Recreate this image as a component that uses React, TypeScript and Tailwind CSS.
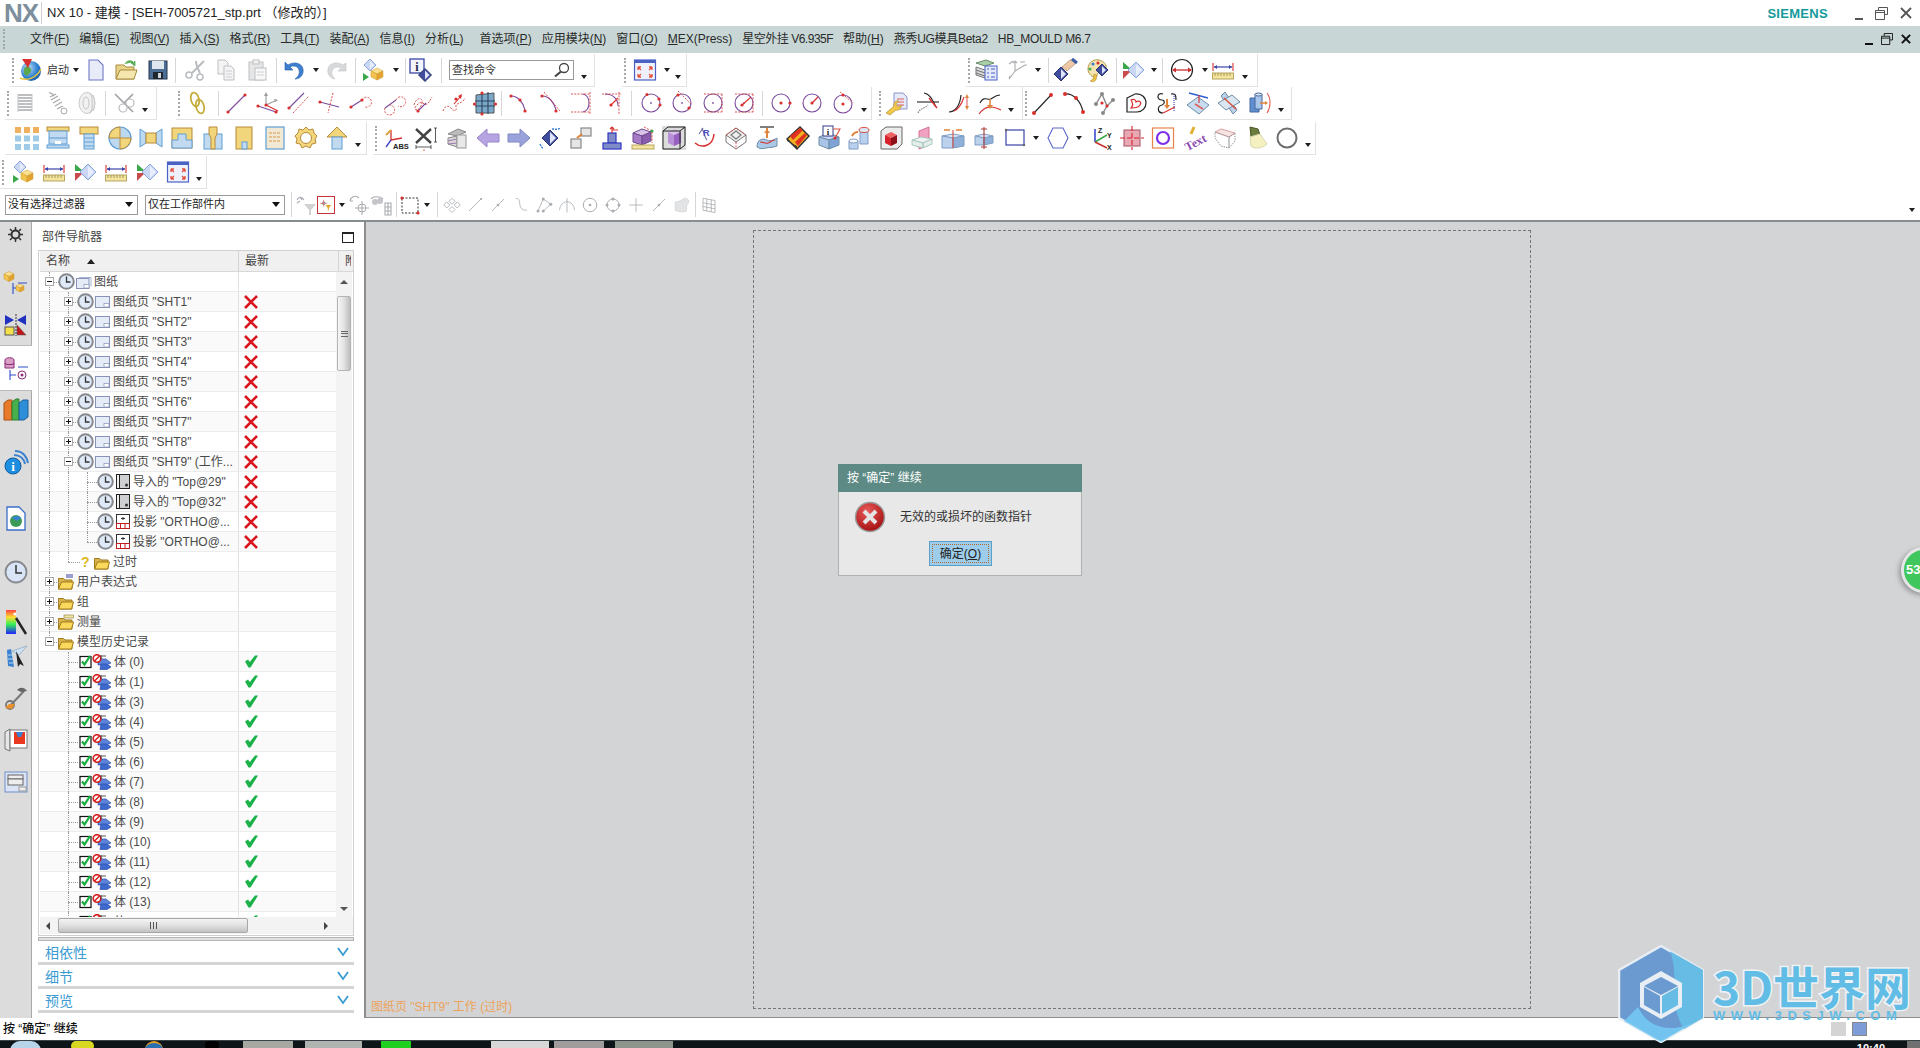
import React from "react";

// small drawing helpers for the toolbar pictures
const Dot = ({ x, y, c = "#d8302f", r = 1.6 }: { x: number; y: number; c?: string; r?: number }) => <circle cx={x} cy={y} r={r} fill={c} />;
const Ln = ({ d, c = "#7b4a9e", w = 1.1, dash }: { d: string; c?: string; w?: number; dash?: string }) => (
  <path d={d} fill="none" stroke={c} strokeWidth={w} strokeDasharray={dash} />
);
const Red = ({ d }: { d: string }) => <Ln d={d} c="#d8403f" w={0.9} dash="2 1.3" />;
const Dia = ({ x, y, s = 6, dark = false }: { x: number; y: number; s?: number; dark?: boolean }) => (
  <>
    <path d={`M${x} ${y - s}L${x + s} ${y}L${x} ${y + s}L${x - s} ${y}Z`} fill={dark ? "#3f4d9c" : "#c9d6f4"} stroke={dark ? "#2c3570" : "#8ea6de"} />
    <path d={`M${x} ${y - s + 2}L${x + s - 2} ${y}L${x} ${y + s - 2}Z`} fill={dark ? "#dfe6fa" : "#e8eefb"} />
  </>
);
const Cube = ({ x, y, s = 6 }: { x: number; y: number; s?: number }) => (
  <>
    <path d={`M${x} ${y}l${s} -${s / 2}l${s} ${s / 2}l-${s} ${s / 2}Z`} fill="#fbe08f" stroke="#c99a2c" strokeWidth=".5" />
    <path d={`M${x} ${y}l${s} ${s / 2}v${s}l-${s} -${s / 2}Z`} fill="#f5c34f" stroke="#c99a2c" strokeWidth=".5" />
    <path d={`M${x + 2 * s} ${y}l-${s} ${s / 2}v${s}l${s} -${s / 2}Z`} fill="#e3a333" stroke="#c99a2c" strokeWidth=".5" />
  </>
);
const BlueBox = ({ x, y, w, h, f = "#c2daf0" }: { x: number; y: number; w: number; h: number; f?: string }) => (
  <rect x={x} y={y} width={w} height={h} fill={f} stroke="#5f9fd6" />
);
const YelBox = ({ x, y, w, h }: { x: number; y: number; w: number; h: number }) => <rect x={x} y={y} width={w} height={h} fill="#f2d67c" stroke="#b98a3a" />;
const Ruler = () => (
  <>
    <Ln d="M2 5V13M22 5V13" c="#d8302f" />
    <Ln d="M3 9H21" c="#3a43a8" w={1.2} />
    <path d="M3 9l3-2v4ZM21 9l-3-2v4Z" fill="#3a43a8" />
    <rect x="1.500" y="15" width="21" height="6" fill="#f3e4a0" stroke="#b7a55e" />
    <Ln d="M4 15v3M7 15v3M10 15v3M13 15v3M16 15v3M19 15v3" c="#8b7d3c" w={0.7} />
  </>
);
const TinyCircle = ({ a = false, b = false, tan = false }: { a?: boolean; b?: boolean; tan?: boolean }) => (
  <>
    <circle cx="12" cy="12" r="9" fill="none" stroke="#7b4a9e" strokeWidth="1.100" />
    {tan && <Red d="M8 0L22 14" />}
    {a && <Red d="M3 3H21M3 21H21M21 3V21" />}
    {b ? <><Dot x={12} y={12} /><Dot x={21} y={12} /></> : <Ln d="M11 12h2M12 11v2" w={0.8} />}
  </>
);
const GrayNode = ({ d }: { d: string }) => <Ln d={d} c="#a9acb0" w={1.1} />;

const icons: Record<string, React.ReactNode> = {
  ball: (
    <>
      <defs>
        <radialGradient id="gb" cx=".35" cy=".35" r=".8"><stop offset="0" stopColor="#bfe3fb" /><stop offset=".6" stopColor="#2f7fd0" /><stop offset="1" stopColor="#164e9a" /></radialGradient>
      </defs>
      <circle cx="12" cy="13" r="10" fill="url(#gb)" />
      <path d="M6 9c3-2 5 0 6 2s-1 4-3 6-4-1-4-3 0-4 1-5Z" fill="#5da84a" />
      <path d="M1 20c6 3 16 1 21-9" fill="none" stroke="#e7c43d" strokeWidth="1.500" />
      <path d="M3 1h10l-4 9Z" fill="#d8302f" />
    </>
  ),
  new: <path d="M5 2h9l5 5v15H5Z" fill="#e8ebf8" stroke="#6f77c8" strokeWidth="1.100" />,
  open: (
    <>
      <path d="M2 7h8l2 2h8v12H2Z" fill="#e9d28a" stroke="#a68a3c" />
      <path d="M2 21l4-9h17l-3 9Z" fill="#f5e6ae" stroke="#a68a3c" />
      <path d="M11 6c2-4 6-4 8-2l-2 1 4 3 0-5-1 1" fill="#5cb85c" stroke="#3b8d3b" strokeWidth=".6" />
    </>
  ),
  save: (
    <>
      <rect x="3" y="3" width="18" height="18" fill="#4c6e95" stroke="#24364e" />
      <rect x="6" y="3" width="12" height="8" fill="#dfe6ee" />
      <rect x="7" y="14" width="10" height="7" fill="#20262e" />
      <rect x="12" y="15" width="3" height="5" fill="#cfd6de" />
    </>
  ),
  cut: (
    <>
      <Ln d="M21 3L9 15M13 3c0 5 2 8 4 12M3 21" c="#b9bcc0" w={2} />
      <circle cx="6" cy="17" r="3" fill="none" stroke="#b9bcc0" strokeWidth="1.500" />
      <circle cx="17" cy="19" r="3" fill="none" stroke="#b9bcc0" strokeWidth="1.500" />
    </>
  ),
  copy: (
    <>
      <path d="M4 2h7l3 3v11H4Z" fill="#f4f4f4" stroke="#bcbfc2" />
      <path d="M10 8h7l3 3v11H10Z" fill="#f4f4f4" stroke="#bcbfc2" />
      <Ln d="M12 13h6M12 16h6M12 19h6" c="#c9cbce" w={0.9} />
    </>
  ),
  paste: (
    <>
      <rect x="4" y="4" width="14" height="18" fill="#e6e6e6" stroke="#bcbfc2" />
      <rect x="8" y="2" width="6" height="4" fill="#f3f3f3" stroke="#bcbfc2" />
      <rect x="10" y="10" width="11" height="12" fill="#f8f8f8" stroke="#bcbfc2" />
      <Ln d="M12 14h7M12 17h7" c="#c9cbce" w={0.9} />
    </>
  ),
  undo: <path d="M3 4v8h8L8 9c3-2 8-1 9 3 1 4-1 7-4 9 5 0 9-4 8-10-1-6-9-8-15-4Z" fill="#3f7fd0" stroke="#245ca6" strokeWidth=".6" />,
  redo: <path d="M21 5v8h-8l3-3c-3-2-8-1-9 3-1 3 1 6 3 8-5-1-8-5-7-10 1-6 9-8 15-4Z" fill="#d7d9db" stroke="#bfc1c3" strokeWidth=".6" />,
  diaCube: (
    <>
      <Dia x={9} y={7} s={6} />
      <path d="M2 15l6 4-6 4Z" fill="#3aa84a" />
      <Cube x={10} y={13} s={6} />
    </>
  ),
  info: (
    <>
      <rect x="1" y="1" width="14" height="14" fill="#f3f5ff" stroke="#3b45a5" strokeWidth="1.300" />
      <text x="8" y="12.500" textAnchor="middle" fontSize="12" fontWeight="700" fontFamily="Liberation Serif" fill="#20264f">i</text>
      <Dia x={16} y={17} s={6.500} dark />
    </>
  ),
  fit: (
    <>
      <rect x="1.500" y="2" width="21" height="20" fill="#eef1fb" stroke="#4a62c4" strokeWidth="1.200" />
      <rect x="1.500" y="2" width="21" height="3" fill="#4a62c4" />
      <Ln d="M5 9l3 3M19 9l-3 3M5 19l3-3M19 19l-3-3M5 9h3M5 9v3M19 9h-3M19 9v3M5 19h3M5 19v-3M19 19h-3M19 19v-3" c="#e2503c" w={1.300} />
    </>
  ),
  layers: (
    <>
      <path d="M2 5l10-3 8 3-9 3Z" fill="#a9cfa8" stroke="#6b8b6a" />
      <path d="M2 9l9 3 4-1v8l-4 1-9-3Z" fill="#dcdcdc" stroke="#777" />
      <Ln d="M2 12l9 3M2 15l9 3" c="#777" />
      <rect x="11" y="8" width="12" height="14" fill="#e4e8fb" stroke="#4a62c4" />
      <Ln d="M13 11h2M17 11h4M13 15h2M17 15h4M13 19h2M17 19h4" c="#4a62c4" />
    </>
  ),
  csysGray: <GrayNode d="M10 13V3M10 13l10-6M10 13l-6 8M10 3l-2 2M10 3l2 2M20 7h2M4 21l1-3M4 6l4-3M15 4l5 0" />,
  handDia: (
    <>
      <Dia x={7} y={16} s={7} dark />
      <path d="M8 9l8-7c3-1 6 1 5 4l-8 7-5-4Z" fill="#efc9a5" stroke="#9b7a5a" strokeWidth=".6" />
      <path d="M18 1l5 4" stroke="#3a5fa8" strokeWidth="3" />
    </>
  ),
  palette: (
    <>
      <path d="M3 11C3 4 9 1 14 2c5 1 8 5 7 9-1 3-6 2-8 4-2 2 0 4-3 4-4 0-7-4-7-8Z" fill="#f4e4b0" stroke="#b49a50" />
      <Dot x={8} y={6} c="#3a7fd0" /><Dot x={13} y={5} c="#d8302f" /><Dot x={5} y={11} c="#4caf50" />
      <Dia x={17} y={12} s={6} dark />
      <path d="M5 23l3-2 1-5 3 1-1 5-3 2Z" fill="#f0c040" stroke="#a68a3c" strokeWidth=".5" />
    </>
  ),
  triDia: (
    <>
      <path d="M2 4l8 7H2Z" fill="#3aa84a" />
      <path d="M2 13h8l-8 8Z" fill="#c94b4b" />
      <Dia x={15} y={12} s={8} />
    </>
  ),
  circArrow: (
    <>
      <circle cx="12" cy="12" r="10.500" fill="none" stroke="#222" strokeWidth="1.200" />
      <Ln d="M3 12H21" c="#c82f2f" w={1.300} />
      <path d="M2 12l4-2.500v5ZM22 12l-4-2.500v5Z" fill="#c82f2f" />
    </>
  ),
  ruler: <Ruler />,
  spring: (
    <>
      <Ln d="M5 4h14M5 7h14M5 10h14M5 13h14M5 16h14M5 19h14" c="#a7a9ab" w={1.500} />
      <Ln d="M5 3v18M19 3v18" c="#c8c9cb" w={1} />
    </>
  ),
  tension: (
    <>
      <Ln d="M4 2c3-1 4 2 5 3M5 6l6-3M6 9l7-4M8 12l7-4M10 15l7-4M12 18l6-3" c="#a7a9ab" w={1.300} />
      <circle cx="19" cy="20" r="3" fill="none" stroke="#a7a9ab" />
    </>
  ),
  coil: (
    <>
      <ellipse cx="12" cy="12" rx="8" ry="10.500" fill="#f1f1f1" stroke="#c9cacc" />
      <ellipse cx="11" cy="12" rx="3" ry="6" fill="none" stroke="#c4c5c7" />
      <Ln d="M15 2c3 3 3 17 0 20M18 4c2 4 2 12 0 16" c="#c9cacc" />
    </>
  ),
  knot: (
    <>
      <Ln d="M3 3L21 21M21 3l-9 9" c="#9ea0a3" w={1.600} />
      <circle cx="11" cy="17" r="4" fill="none" stroke="#b9bbbe" strokeWidth="1.200" />
      <circle cx="18" cy="12" r="4" fill="none" stroke="#b9bbbe" strokeWidth="1.200" />
    </>
  ),
  chain: (
    <>
      <ellipse cx="9" cy="8.500" rx="4" ry="7" fill="none" stroke="#c4ad3d" strokeWidth="1.800" transform="rotate(-15 9 8.500)" />
      <ellipse cx="14" cy="15.500" rx="4" ry="7" fill="none" stroke="#c4ad3d" strokeWidth="1.800" transform="rotate(-15 14 15.500)" />
    </>
  ),
  line: <><Ln d="M3 21L20 4" /><Dot x={3} y={21} /><Dot x={20} y={4} /></>,
  axes: (
    <>
      <Ln d="M10 14V3M10 14l11-5" c="#9a9da0" />
      <path d="M10 1l2 4h-4ZM22 9l-4-1 1 3Z" fill="#9a9da0" />
      <Ln d="M2 15L20 21" />
      <Ln d="M10 14l12 6" c="#d8302f" />
      <Dot x={2} y={15} /><Dot x={10} y={14} /><Dot x={20} y={21} />
    </>
  ),
  offLine: <><Ln d="M2 17L17 2" /><Red d="M6 22L22 5" /><Dot x={2} y={17} /></>,
  crossLine: <><Ln d="M2 11L21 16" /><Red d="M15 2L10 22" /><Dot x={2} y={11} /></>,
  lineArc: <><Ln d="M2 16L13 9" /><Red d="M13 9a5 5 0 1 1 3 7" /><Dot x={2} y={16} /><Dot x={13} y={9} /></>,
  lineTwo: <><Ln d="M5 17L16 9" /><Red d="M5 17a5 5 0 1 0 5-3M16 9a5 5 0 1 1 2 6" /></>,
  wave: <><Red d="M3 14c2-8 9-8 8-2s-6 8-7 6 6-9 8-6 5 2 9-6" /><Ln d="M7 20L15 12" /><Dot x={7} y={20} /></>,
  spline: <><Red d="M1 20c3-8 7-4 9-2s5 3 4-2 6-2 9-9" /><Ln d="M12 13L19 5" c="#d8302f" /><path d="M20 3l-1 5-3-3Z" fill="#d8302f" /><Dot x={14} y={8} /></>,
  gridBox: (
    <>
      <path d="M3 4l18-2v20H3Z" fill="#7ba7c9" stroke="#555" />
      <Ln d="M2 10h20M2 15h20M9 1v22M15 1v22" c="#2d4660" />
      <Dot x={1.500} y={13} /><Dot x={22.500} y={13} /><Dot x={9} y={2} /><Dot x={9} y={23} />
    </>
  ),
  arc1: <><Ln d="M4 5c7 0 12 6 14 14" /><Dot x={4} y={5} /><Dot x={13} y={9} /><Dot x={18} y={20} /></>,
  arc2: <><Ln d="M4 5c7 0 12 6 14 14" /><Red d="M6 1L22 20" /><Dot x={4} y={5} /><Dot x={18} y={20} /></>,
  arc3: <><Ln d="M14 3c8 2 8 16 0 18" /><Red d="M2 3H21M2 21H21M21 1V23" /></>,
  arc4: <><Ln d="M5 3c8 0 13 5 13 12" /><Red d="M2 3H22M19 1V23" /><Ln d="M11 14L18 7" c="#d8302f" /><Dot x={11} y={14} /></>,
  circ1: <><TinyCircle /><Dot x={8} y={3.500} /><Dot x={20} y={8} /><Dot x={21} y={14} /></>,
  circ2: <><TinyCircle tan /><Dot x={8} y={4} /><Dot x={19} y={17} /></>,
  circ3: <TinyCircle a />,
  circ4: <><TinyCircle a /><Ln d="M10 14L19 6" c="#d8302f" /><Dot x={10} y={14} /></>,
  circ5: <TinyCircle b />,
  circ6: <><circle cx="12" cy="12" r="9" fill="none" stroke="#7b4a9e" strokeWidth="1.100" /><Ln d="M12 12L18 6" c="#d8302f" w={1.300} /><Dot x={12} y={12} /></>,
  circ7: <><circle cx="12" cy="13" r="9" fill="none" stroke="#7b4a9e" strokeWidth="1.100" /><Red d="M9 1L22 12" /><Dot x={12} y={13} /><Dot x={12} y={4} /></>,
  wrenchDoc: (
    <>
      <path d="M9 2h9l4 4v12H9Z" fill="#e5e9f8" stroke="#8a96c8" />
      <Ln d="M12 8h7M12 11h7M12 14h7" c="#e0605a" w={1.200} />
      <path d="M1 22l8-7c-1-3 2-6 5-5l-3 3 1 2 2 1 2-2c1 3-2 6-5 5l-6 5Z" fill="#f2c84c" stroke="#a5862c" strokeWidth=".6" />
    </>
  ),
  trim: <><Ln d="M1 11H23" c="#222" /><Ln d="M8 2c6 1 8 6 12 14" c="#222" /><Ln d="M13 7L21 17" c="#d8302f" w={1.400} /><Ln d="M2 22c2-5 6-4 10-8" c="#777" dash="1.500 1" /></>,
  curveArrow: <><Ln d="M2 21c6 0 11-6 12-17" c="#222" w={1.200} /><Ln d="M7 20c5-2 8-8 10-14" c="#d8302f" /><Ln d="M20 5v12" c="#e0605a" /><path d="M20 3l2 4h-4ZM20 19l2-4h-4Z" fill="#e0843c" /></>,
  curveOff: <><Ln d="M2 12c4-8 8-2 11-4s5-4 9-4" c="#222" /><Ln d="M1 23c6-8 12-9 22-4" c="#d8302f" /><Ln d="M12 8v7" c="#e0843c" w={1.500} /><path d="M12 18l3-4H9Z" fill="#e0843c" /></>,
  bLine: <><Ln d="M3 22L20 4" c="#222" /><Dot x={3} y={22} r={2} /><Dot x={20} y={4} r={2} /></>,
  bArc: <><Ln d="M3 3c8-1 16 7 18 18" c="#222" /><Dot x={3} y={3} r={2} /><Dot x={14} y={7} r={2} /><Dot x={21} y={21} r={2} /></>,
  nodes: <><Ln d="M3 13L9 3L14 15L20 9M14 15L10 22" c="#888" w={1.400} /><Dot x={9} y={3} c="#888" r={2} /><Dot x={3} y={13} c="#888" r={2} /><Dot x={20} y={9} c="#888" r={2} /><Dot x={10} y={22} c="#888" r={2} /><Dot x={9} y={12} /><Dot x={14} y={15} /></>,
  heart: <><path d="M3 7l8-4c7-1 11 4 11 9s-4 9-9 9H3Z" fill="#fff" stroke="#222" strokeWidth="1.200" /><path d="M7 9c4-2 5 1 5 2 3-2 6 0 4 3-1 2-5 3-9 3 2-2 2-5 0-8Z" fill="none" stroke="#d8302f" strokeWidth="1.200" /></>,
  bridge: <><Ln d="M8 3C2 1 1 9 7 9c3 0 3 4 0 5-5 1-5 8 1 8M16 3c5-1 5 2 5 6" c="#222" w={1.200} /><Ln d="M19 3v17" c="#3a43a8" dash="1 1" /><Ln d="M8 22l12-6" c="#d8302f" /><Ln d="M12 8v7" c="#e0843c" w={2} /><path d="M12 18l3-4H9Z" fill="#e0843c" /></>,
  projSurf: <><path d="M1 14l11-8 11 8-10 9Z" fill="#c7dcef" stroke="#6e8ea8" /><Ln d="M3 2l19 5" c="#2f5fd0" w={1.500} /><Ln d="M13 4v8" c="#d8302f" /><Ln d="M9 13l8 5" c="#e0605a" w={1.500} /></>,
  surfPlane: <><path d="M8 1l12 18-4 4L4 5Z" fill="#bcd0e8" stroke="#6e8ea8" /><path d="M1 12l14-8 8 7-14 8Z" fill="#dbe6f3" stroke="#6e8ea8" /><Ln d="M7 7l12 11" c="#d8503f" w={1.500} /></>,
  cylArrow: <><path d="M2 7h9v14H2Z" fill="#5f8fd0" stroke="#48689c" /><path d="M7 3h7v15H7Z" fill="#a9c5ea" stroke="#48689c" /><ellipse cx="10.500" cy="3.500" rx="3.500" ry="1.500" fill="#dde8f7" stroke="#48689c" /><Ln d="M12 12h7" c="#e0843c" w={1.500} /><path d="M20 12l-3-2v4Z" fill="#e0843c" /><Ln d="M19 2c4 5 4 14 0 20" c="#e0605a" /></>,
  grid: (
    <>
      <rect x="0" y="1" width="6" height="6" fill="#f0b060" /><rect x="9" y="1" width="6" height="6" fill="#f0b060" /><rect x="18" y="1" width="6" height="6" fill="#f0b060" />
      <rect x="0" y="9.500" width="6" height="6" fill="#9dcbe8" /><rect x="9" y="9.500" width="6" height="6" fill="#9dcbe8" /><rect x="18" y="9.500" width="6" height="6" fill="#9dcbe8" />
      <rect x="0" y="18" width="6" height="6" fill="#9dcbe8" /><rect x="9" y="18" width="6" height="6" fill="#9dcbe8" /><rect x="18" y="18" width="6" height="6" fill="#9dcbe8" />
    </>
  ),
  mold: <><YelBox x={1} y={1} w={22} h={4} /><BlueBox x={3} y={5} w={18} h={13} /><rect x="9" y="15" width="6" height="3" fill="#fff" /><Ln d="M3 12h18" c="#5f9fd6" /><BlueBox x={1} y={19} w={22} h={3} /></>,
  bolt: <><YelBox x={3} y={1} w={18} h={7} /><BlueBox x={7} y={8} w={10} h={15} /><Ln d="M7 12h10M7 16h10M7 20h10" c="#5f9fd6" /></>,
  pie: <><circle cx="12" cy="12" r="11" fill="#bcd9f0" stroke="#5f9fd6" strokeWidth="1.200" /><path d="M12 12V1a11 11 0 0 0-11 11ZM12 12h11a11 11 0 0 1-11 11Z" fill="#f2d67c" stroke="#b98a3a" /></>,
  spool: <><path d="M1 3l6 4v10l-6 4Z" fill="#bcd9f0" stroke="#5f9fd6" /><path d="M23 3l-6 4v10l6 4Z" fill="#bcd9f0" stroke="#5f9fd6" /><YelBox x={7} y={7} w={10} h={10} /></>,
  step: <><rect x="2" y="2" width="20" height="20" fill="#f2d67c" stroke="#b98a3a" /><path d="M2 22V14h6V8h8v6h6v8Z" fill="#c2daf0" stroke="#5f9fd6" /></>,
  taper: <><BlueBox x={3} y={8} w={18} h={15} /><path d="M8 1h8v7l-2 4v11h-4V12L8 8Z" fill="#f2d67c" stroke="#b98a3a" /></>,
  pocket: <><rect x="4" y="1" width="16" height="22" fill="#f2d67c" stroke="#b98a3a" /><BlueBox x={10} y={16} w={5} h={7} /></>,
  sheet: <><rect x="3" y="1" width="18" height="22" fill="#f1e9d3" stroke="#5f9fd6" strokeWidth="1.200" /><Ln d="M6 7h12M6 11h12M6 15h12" c="#d89a50" dash="3 1" /></>,
  gear: <><path d="M12 1l3 3 4-1 1 4 3 3-2 3 1 4-4 1-2 4-4-2-4 2-2-4-4-1 1-4-2-3 3-3 1-4 4 1Z" fill="#f2d67c" stroke="#b98a3a" /><circle cx="12" cy="12" r="5.500" fill="#fff" stroke="#b98a3a" /></>,
  up: <><path d="M12 1L22 11H2Z" fill="#f2d67c" stroke="#b98a3a" /><BlueBox x={7} y={11} w={10} h={12} /></>,
  csysAbs: (
    <>
      <Ln d="M8 14V4M8 14l11-2" c="#d8302f" w={1.300} /><Ln d="M8 14l-5 7" c="#4040c8" w={1.300} /><Ln d="M3 9L8 4" c="#e0a040" w={2} />
      <text x="10" y="23" fontSize="7.500" fontWeight="700" fontFamily="Liberation Sans" fill="#222">ABS</text>
    </>
  ),
  xdim: <><Ln d="M2 3L17 17M17 3L2 17" c="#444" w={2.400} /><Ln d="M2 21h15M2 19v4M17 19v4M20 2h3M20 16h3M21.500 2v14" c="#333" w={0.8} /><text x="9" y="25" fontSize="4" fill="#d8302f">x</text></>,
  layersG: (
    <>
      <path d="M3 8l10-5 8 3-9 4Z" fill="#bcbcbc" stroke="#888" />
      <path d="M3 12l9-2v11l-9-3Z" fill="#d9d9d9" stroke="#888" />
      <Ln d="M3 15l9-2M3 18l9-1" c="#a07ab0" />
      <rect x="12" y="9" width="9" height="13" fill="#e8e8e8" stroke="#999" />
    </>
  ),
  left: <path d="M1 12L11 3v5h12v8H11v5Z" fill="#b6a4e2" stroke="#9a88c8" />,
  right: <path d="M23 12L13 3v5H1v8h12v5Z" fill="#9aa2dc" stroke="#7f88c0" />,
  diaMove: <><Dia x={12} y={12} s={8} dark /><Ln d="M14 3c3 0 6 1 8-1M2 18c1 2 2 4 3 4" c="#3a7fd0" w={1.500} dash="2 1" /></>,
  twoSq: <><rect x="12" y="2" width="10" height="8" fill="#e6e6e6" stroke="#888" strokeWidth="1.200" /><rect x="2" y="13" width="10" height="9" fill="#e6e6e6" stroke="#888" strokeWidth="1.200" /><Ln d="M8 12l5-4" c="#e0843c" w={2} /></>,
  pad: <><rect x="8" y="7" width="8" height="10" fill="#7f8cc8" stroke="#3038c0" strokeWidth="1.200" /><rect x="3" y="17" width="18" height="6" fill="#7f8cc8" stroke="#3038c0" strokeWidth="1.200" /><Ln d="M12 7V1M12 1l-2 2M12 1l2 2M12 4h6" c="#d8302f" /></>,
  cubeRuler: (
    <>
      <path d="M2 7l9-4 9 3-9 4Z" fill="#d9c2ea" stroke="#6d4a8c" /><path d="M2 7l9 3v9l-9-3Z" fill="#a77bc8" stroke="#6d4a8c" /><path d="M20 6l-9 4v9l9-4Z" fill="#8a5cae" stroke="#6d4a8c" />
      <rect x="1" y="19" width="22" height="4" fill="#f3e4a0" stroke="#b7a55e" /><Red d="M13 1l8 4v12" /><Dot x={21} y={5} c="#3aa84a" />
    </>
  ),
  cubeBox: (
    <>
      <rect x="0" y="0" width="24" height="24" fill="#dcdcdc" />
      <path d="M6 6l7-3 6 3-7 3Z" fill="#d9c2ea" /><path d="M6 6l6 3v11l-6-3Z" fill="#b98fd8" /><path d="M19 6l-7 3v11l7-3Z" fill="#9860c0" />
      <path d="M1 5l5-4h17v18l-5 4H1ZM1 5h17v18M18 5l5-4" fill="none" stroke="#222" />
    </>
  ),
  radius: <><Ln d="M9 2c2 5 3 10 5 12M10 2L6 8" c="#6a6a9a" /><text x="10" y="10" fontSize="9" fontWeight="700" fontFamily="Liberation Sans" fill="#4a4ac0">R</text><Ln d="M2 17c7 6 18 3 19-9" c="#d8302f" w={1.500} /></>,
  wireBox: <><path d="M2 9l10-7 10 7-10 7Z" fill="#eee" stroke="#777" /><path d="M2 9v7l10 7 10-7V9" fill="none" stroke="#777" /><Ln d="M7 9l5-4 5 4-5 4Z" c="#777" /><Red d="M2 9l10-7 10 7M12 16v7" /></>,
  surfUp: <><path d="M2 21c0-8 6-9 10-7s8-1 10-2v8c-5 2-7 1-11 2-4 1-6 1-9-1Z" fill="#a9c8e8" stroke="#6e8ea8" /><Ln d="M5 16c4 0 5 2 8 1s4-3 7-3" c="#d8302f" w={1.200} /><Ln d="M5 1h14" c="#555" w={1.500} /><Ln d="M12 2v10" c="#e0843c" w={2} /><path d="M12 3l3 4H9Z" fill="#e0843c" /></>,
  stripes: <><path d="M1 13L14 1l9 9-12 13Z" fill="#f0b020" stroke="#333" strokeWidth="1.500" /><path d="M4 10l10-8 3 2L7 14ZM9 16l10-9 2 2L12 20Z" fill="#e03020" /><path d="M1 13l10 10v-3L1 15Z" fill="#333" /></>,
  infoBox: (
    <>
      <path d="M2 11l10 3 10-3-10-4Z" fill="#c9d6f4" stroke="#6e8ea8" /><path d="M2 11l10 3v9L2 19Z" fill="#a8c4e6" stroke="#6e8ea8" /><path d="M22 11l-10 3v9l10-4Z" fill="#7fa3d4" stroke="#6e8ea8" />
      <rect x="6" y="0" width="10" height="10" fill="#fff" stroke="#333a8c" /><text x="11" y="9" textAnchor="middle" fontSize="9" fontWeight="700" fontFamily="Liberation Serif" fill="#222">i</text>
      <Ln d="M16 3h7l-5 9" c="#d8503f" /><Dot x={18} y={12} />
    </>
  ),
  cyls: <><path d="M12 4h8v14h-8Z" fill="#b9d0ee" stroke="#7f9cc4" /><ellipse cx="16" cy="4" rx="5" ry="2.500" fill="#dde8f7" stroke="#d8503f" /><path d="M1 15h9v8H1Z" fill="#b9d0ee" stroke="#7f9cc4" /><ellipse cx="5.500" cy="15" rx="4.500" ry="2" fill="#f8f8f8" stroke="#7f9cc4" /><path d="M4 10c2-4 4-4 6-4" fill="none" stroke="#e0843c" strokeWidth="2" /></>,
  redCube: (
    <>
      <path d="M2 5l5-4h16v17l-5 5H2Z" fill="#ececec" stroke="#666" />
      <path d="M6 9l6-3 6 3-6 3Z" fill="#f06060" /><path d="M6 9l6 3v8l-6-3Z" fill="#d8202a" /><path d="M18 9l-6 3v8l6-3Z" fill="#8c1018" />
    </>
  ),
  plane: <><path d="M9 5l10-4v18L9 23Z" fill="#f0a0c0" stroke="#d87098" /><path d="M2 14l9-3 11 2-9 4Z" fill="#eef4f2" stroke="#a8c8c0" /><path d="M2 14v5l11 3v-5ZM13 17l9-4v5l-9 4Z" fill="#e4eeea" stroke="#a8c8c0" /></>,
  cubeSplit: <><path d="M1 10l11-2 11 2-11 2Z" fill="#dfe9f6" stroke="#7f9cc4" /><path d="M1 10v12h11V12Z" fill="#bcd2ec" stroke="#7f9cc4" /><path d="M23 10v10l-11 2V12Z" fill="#8fb0d8" stroke="#7f9cc4" /><Ln d="M12 4v18" c="#d8503f" /><Ln d="M3 4h6M15 4h6" c="#e0843c" w={1.500} /></>,
  cubeCut: <><path d="M3 10l9-2 9 2-9 2Z" fill="#dfe9f6" stroke="#7f9cc4" /><path d="M3 10v9h9v-7Z" fill="#bcd2ec" stroke="#7f9cc4" /><path d="M21 10v7l-9 2v-7Z" fill="#8fb0d8" stroke="#7f9cc4" /><Ln d="M12 1v22M9 3h6M9 21h6" c="#a83a3a" /></>,
  rect: <><rect x="3" y="4" width="18" height="15" fill="#fff" stroke="#3a43a8" strokeWidth="1.200" /><Dot x={3} y={4} c="#666" r={1.200} /><Dot x={21} y={19} c="#666" r={1.200} /></>,
  hex: <path d="M7 2h10l5 10-5 10H7L2 12Z" fill="#fff" stroke="#5c68c8" strokeWidth="1.100" />,
  xyz: (
    <>
      <Ln d="M6 16V3" c="#2f3fc8" w={1.500} /><Ln d="M6 16L18 9" c="#3aa84a" w={1.500} /><Ln d="M6 16L18 22" c="#c82f2f" w={1.500} />
      <text x="9" y="7" fontSize="7" fontWeight="700" fontFamily="Liberation Sans" fill="#222">Z</text>
      <text x="18" y="12" fontSize="7" fontWeight="700" fontFamily="Liberation Sans" fill="#222">Y</text>
      <text x="18" y="24" fontSize="7" fontWeight="700" fontFamily="Liberation Sans" fill="#222">X</text>
    </>
  ),
  crossSq: <><rect x="4" y="4" width="16" height="16" fill="#e8a8b4" stroke="#a85060" /><Ln d="M12 0v24M0 12h24" c="#d8202a" dash="5 2" /></>,
  ringSq: <><rect x="1.500" y="2" width="21" height="20" fill="#fff" stroke="#e8844a" strokeWidth="1.200" /><circle cx="12" cy="12" r="6" fill="none" stroke="#7c2fe8" strokeWidth="2.200" /></>,
  textIc: (
    <>
      <Ln d="M9 8l3-7" c="#e0b030" w={3} />
      <text x="1" y="21" fontSize="12" fontWeight="700" fontFamily="Liberation Serif" fill="#8a4ab0" transform="rotate(-28 12 14)">Text</text>
    </>
  ),
  wireCube: <><path d="M2 6l6-3 14 4-6 4Z" fill="#f6e4e4" stroke="#e0a0a0" /><path d="M2 6l14 5v11L8 20 2 12Z" fill="none" stroke="#999" strokeDasharray="1.500 1" /><path d="M16 11l6-4v8l-6 7Z" fill="none" stroke="#999" strokeDasharray="1.500 1" /></>,
  lamp: <><path d="M6 1l8 2 2 6-9 2Z" fill="#6d7d3c" stroke="#4a5528" /><path d="M6 11l10-3 7 10c-5 5-14 5-16 2Z" fill="#f4f0c0" stroke="#d8d8b0" /></>,
  ring: <circle cx="12" cy="12" r="9.500" fill="none" stroke="#6e6e6e" strokeWidth="2" />,
  gFilter: <><GrayNode d="M3 7c2-4 5-3 7 0M3 10l3-2M6 4l2 3" /><path d="M10 11h12l-5 6v5h-2v-5Z" fill="#d0d2d4" /></>,
  rFilter: <><Ln d="M8 3v12M2 9h12" c="#d8302f" w={0.9} /><circle cx="8" cy="9" r="2.500" fill="none" stroke="#555" /><path d="M11 12h10l-4 5v4h-2v-4Z" fill="#e8a830" /></>,
  gRot: <><GrayNode d="M2 8c1-5 6-6 9-3M2 8l1-3M2 8l3 0M14 8v14M7 15h14" /><circle cx="14" cy="15" r="4" fill="none" stroke="#a9acb0" /></>,
  gStack: <><GrayNode d="M2 6c2-3 9-3 12 0M16 10h6v12h-6ZM16 14h6M16 18h6M19 10v12" /><circle cx="6" cy="9" r="3" fill="#c3c5c8" /><circle cx="11" cy="8" r="3" fill="#c3c5c8" /></>,
  selBox: <><rect x="4" y="5" width="16" height="15" fill="none" stroke="#333" strokeDasharray="2 1.500" /><Dot x={4} y={5} /><Dot x={20} y={20} /></>,
  gSnap: <GrayNode d="M12 3l4 4-4 4-4-4ZM5 8l4 4-4 4-4-4ZM19 8l4 4-4 4-4-4ZM12 14l4 4-4 4-4-4Z" />,
  gLine: <><GrayNode d="M4 20L20 4" /><circle cx="20" cy="4" r="1.500" fill="#a9acb0" /></>,
  gLineM: <><GrayNode d="M4 20L20 4" /><circle cx="12" cy="12" r="1.800" fill="#a9acb0" /></>,
  gCurve: <GrayNode d="M5 3c8 0 3 10 8 14 2 2 5 2 7 2" />,
  gPts: <><GrayNode d="M4 20L11 4L21 11L11 20" /><circle cx="11" cy="4" r="2" fill="#a9acb0" /><circle cx="4" cy="20" r="2" fill="#a9acb0" /><circle cx="21" cy="11" r="2" fill="#a9acb0" /><circle cx="11" cy="20" r="2" fill="#a9acb0" /></>,
  gArc: <GrayNode d="M2 19C3 4 21 4 22 19M12 3V22" />,
  gCirc: <><circle cx="12" cy="12" r="9" fill="none" stroke="#a9acb0" strokeWidth="1.300" /><circle cx="12" cy="12" r="1.800" fill="#a9acb0" /></>,
  gCircP: <><circle cx="12" cy="12" r="8" fill="none" stroke="#a9acb0" strokeWidth="1.300" /><circle cx="12" cy="4" r="2" fill="#a9acb0" /><circle cx="4" cy="12" r="2" fill="#a9acb0" /><circle cx="20" cy="12" r="2" fill="#a9acb0" /><circle cx="12" cy="20" r="2" fill="#a9acb0" /></>,
  gPlus: <GrayNode d="M12 3V21M3 12H21" />,
  gSurf: <path d="M3 8c5 0 8-2 12-5 3 0 6 1 6 4s-2 4-3 6v7c-5 2-10 1-15-1Z" fill="#e3e4e5" stroke="#d0d1d3" />,
  gGrid: <GrayNode d="M4 3l16 3v16L4 19ZM9 4v16M15 5v16M4 9l16 3M4 14l16 3" />,
};

const Icon = ({ n, s = 24 }: { n: string; s?: number }) => (
  <svg width={s} height={s} viewBox="0 0 24 24" className="block shrink-0 overflow-visible">{icons[n]}</svg>
);

const Caret = ({ low = false, w = "w-[12px]" }: { low?: boolean; w?: string }) => (
  <div className={`flex shrink-0 justify-center ${w} ${low ? "pt-[14px]" : ""}`}>
    <div className="h-0 w-0 border-x-[3.5px] border-t-[4px] border-x-transparent border-t-[#1e1e1e]" />
  </div>
);
const Sep = ({ w = "w-[6px]" }: { w?: string }) => (
  <div className={`flex h-full shrink-0 items-center justify-center ${w}`}>
    <div className="h-[25px] w-px bg-[#d6d6d6]" />
  </div>
);
const Tool = ({ n, w = "w-[31px]" }: { n: string; w?: string }) => (
  <div className={`flex shrink-0 items-center justify-center ${w}`}>
    <Icon n={n} />
  </div>
);
const Handle = () => <div className="ml-[2px] h-[25px] w-[2px] shrink-0 border-l-2 border-dotted border-[#a8a8a8]" />;
const Group = ({ className = "", children }: { className?: string; children: React.ReactNode }) => (
  <div className={`flex h-[33px] items-center border-r border-b border-[#e2e2e2] bg-white ${className}`}>{children}</div>
);

const Menu = ({ label, k, tail, className = "" }: { label: string; k: string; tail?: string; className?: string }) => (
  <span className={`whitespace-nowrap ${className}`}>{label}(<u>{k}</u>){tail}</span>
);

const TitleBar = () => (
  <div className="flex h-[26px] items-center bg-white">
    <span className="ml-[4px] w-[34px] text-[26px] leading-none font-bold tracking-[-1px] text-[#7d8f9c] [font-family:'Liberation_Sans',sans-serif]">NX</span>
    <div className="ml-[3px] h-[22px] w-px bg-[#d0d0d0]" />
    <span className="ml-[5px] text-[13px] whitespace-pre text-[#222]">NX 10 - 建模 - [SEH-7005721_stp.prt （修改的）]</span>
    <span className="ml-auto text-[13px] leading-none font-bold tracking-[0.3px] text-[#149a9c] [font-family:'Liberation_Sans',sans-serif]">SIEMENS</span>
    <div className="mr-[8px] ml-[27px] flex items-center gap-[12px]">
      <div className="mt-[12px] h-[2px] w-[8px] bg-[#555]" />
      <svg width="13" height="13" viewBox="0 0 13 13" className="block"><path d="M3.500 3V.5h9v7H9.500M.5 3.500h9v9h-9ZM.5 5.500h9" fill="none" stroke="#555" /></svg>
      <svg width="12" height="12" viewBox="0 0 12 12" className="block"><path d="M1 1l10 10M11 1L1 11" stroke="#555" strokeWidth="1.800" /></svg>
    </div>
  </div>
);

const MenuBar = () => (
  <div className="flex h-[27px] items-center bg-[#c8d7d6] pb-[2px] text-[12px] text-[#2a2a2a]">
    <div className="ml-[3px] h-[20px] w-[2px] border-l-2 border-dotted border-[#a0a8a8]" />
    <div className="ml-[25px] flex gap-[10px]">
      <Menu label="文件" k="F" />
      <Menu label="编辑" k="E" />
      <Menu label="视图" k="V" />
      <Menu label="插入" k="S" />
      <Menu label="格式" k="R" />
      <Menu label="工具" k="T" />
      <Menu label="装配" k="A" />
      <Menu label="信息" k="I" />
      <Menu label="分析" k="L" />
      <Menu label="首选项" k="P" className="ml-[6px]" />
      <Menu label="应用模块" k="N" />
      <Menu label="窗口" k="O" />
      <span><u>M</u>EX(Press)</span>
      <span className="tracking-[-0.5px]">星空外挂 V6.935F</span>
      <Menu label="帮助" k="H" />
      <span className="tracking-[-0.3px]">燕秀UG模具Beta2</span>
      <span className="tracking-[-0.3px]">HB_MOULD M6.7</span>
    </div>
    <div className="mr-[9px] ml-auto flex items-center gap-[8px]">
      <div className="mt-[10px] h-[2px] w-[8px] bg-[#111]" />
      <svg width="12" height="12" viewBox="0 0 13 13" className="block"><path d="M3.500 3V.5h9v7H9.500M.5 3.500h9v9h-9ZM.5 5.500h9" fill="none" stroke="#111" /></svg>
      <svg width="10" height="10" viewBox="0 0 12 12" className="block"><path d="M1 1l10 10M11 1L1 11" stroke="#111" strokeWidth="2.400" /></svg>
    </div>
  </div>
);

const Toolbars = () => (
  <div className="flex flex-col bg-white">
    {/* row 1 */}
    <div className="mt-px flex h-[33px]">
      <Group className="ml-[10px] w-[585px]">
        <Handle />
        <Tool n="ball" w="w-[33px]" />
        <span className="w-[23px] shrink-0 text-[11px] text-[#333]">启动</span>
        <Caret />
        <Tool n="new" w="w-[28px]" />
        <Tool n="open" w="w-[32px]" />
        <Tool n="save" w="w-[32px]" />
        <Sep w="w-[3px]" />
        <Tool n="cut" w="w-[36px]" />
        <Tool n="copy" w="w-[26px]" />
        <Tool n="paste" w="w-[36px]" />
        <Sep w="w-[2px]" />
        <Tool n="undo" w="w-[34px]" />
        <Caret w="w-[10px]" />
        <Tool n="redo" w="w-[32px]" />
        <Sep w="w-[4px]" />
        <Tool n="diaCube" w="w-[32px]" />
        <Caret w="w-[14px]" />
        <Sep w="w-[4px]" />
        <Tool n="info" w="w-[28px]" />
        <Sep w="w-[12px]" />
        <div className="ml-[2px] flex h-[20px] w-[125px] shrink-0 items-center border border-[#999] pl-[2px] text-[11px] text-[#333]">
          查找命令
          <svg width="18" height="18" viewBox="0 0 18 18" className="mr-[2px] ml-auto block"><circle cx="11" cy="7" r="4.500" fill="#fff" stroke="#444" strokeWidth="1.300" /><path d="M8 10.500l-6 5" stroke="#444" strokeWidth="2.200" /></svg>
        </div>
        <Caret low w="w-[19px]" />
      </Group>
      <Group className="ml-[27px] w-[65px]">
        <Handle />
        <Tool n="fit" w="w-[38px]" />
        <Caret w="w-[6px]" />
        <Caret low w="w-[16px]" />
      </Group>
      <Group className="ml-[279px] w-[292px]">
        <Handle />
        <Tool n="layers" />
        <Tool n="csysGray" />
        <Caret />
        <Sep w="w-[8px]" />
        <Tool n="handDia" w="w-[27px]" />
        <Tool n="palette" w="w-[36px]" />
        <Sep w="w-[2px]" />
        <Tool n="triDia" />
        <Caret />
        <Sep w="w-[4px]" />
        <Tool n="circArrow" w="w-[36px]" />
        <Caret w="w-[9px]" />
        <Tool n="ruler" w="w-[28px]" />
        <Caret low w="w-[16px]" />
      </Group>
    </div>
    {/* row 2 */}
    <div className="flex h-[33px]">
      <Group className="ml-[5px] w-[152px]">
        <Handle />
        <Tool n="spring" w="w-[32px]" />
        <Tool n="tension" w="w-[32px]" />
        <Tool n="coil" w="w-[28px]" />
        <Sep w="w-[8px]" />
        <Tool n="knot" w="w-[30px]" />
        <Caret low />
      </Group>
      <Group className="ml-[19px] w-[696px]">
        <Handle />
        <Tool n="chain" w="w-[35px]" />
        <Sep />
        <Tool n="line" />
        <Tool n="axes" />
        <Tool n="offLine" />
        <Tool n="crossLine" />
        <Tool n="lineArc" />
        <Tool n="lineTwo" />
        <Tool n="wave" />
        <Tool n="spline" />
        <Tool n="gridBox" />
        <Sep w="w-[3px]" />
        <Tool n="arc1" />
        <Tool n="arc2" />
        <Tool n="arc3" />
        <Tool n="arc4" />
        <Sep w="w-[8px]" />
        <Tool n="circ1" />
        <Tool n="circ2" />
        <Tool n="circ3" />
        <Tool n="circ4" />
        <Sep />
        <Tool n="circ5" />
        <Tool n="circ6" />
        <Tool n="circ7" />
        <Caret low />
      </Group>
      <Group className="ml-[5px] w-[146px]">
        <Handle />
        <Tool n="wrenchDoc" />
        <Tool n="trim" />
        <Tool n="curveArrow" />
        <Tool n="curveOff" />
        <Caret low />
      </Group>
      <Group className="w-[269px]">
        <Handle />
        <Tool n="bLine" />
        <Tool n="bArc" />
        <Tool n="nodes" />
        <Tool n="heart" />
        <Tool n="bridge" />
        <Tool n="projSurf" />
        <Tool n="surfPlane" />
        <Tool n="cylArrow" />
        <Caret low />
      </Group>
    </div>
    {/* row 3 */}
    <div className="mt-[2px] flex h-[33px]">
      <Group className="ml-[5px] w-[362px]">
        <div className="w-[6px] shrink-0" />
        <Tool n="grid" />
        <Tool n="mold" />
        <Tool n="bolt" />
        <Tool n="pie" />
        <Tool n="spool" />
        <Tool n="step" />
        <Tool n="taper" />
        <Tool n="pocket" />
        <Tool n="sheet" />
        <Tool n="gear" />
        <Tool n="up" />
        <Caret low />
      </Group>
      <Group className="ml-[6px] w-[943px]">
        <Handle />
        <div className="w-[2px] shrink-0" />
        <Tool n="csysAbs" />
        <Tool n="xdim" />
        <Tool n="layersG" />
        <Tool n="left" />
        <Tool n="right" />
        <Tool n="diaMove" />
        <Tool n="twoSq" />
        <Tool n="pad" />
        <Tool n="cubeRuler" />
        <Tool n="cubeBox" />
        <Tool n="radius" />
        <Tool n="wireBox" />
        <Tool n="surfUp" />
        <Tool n="stripes" />
        <Tool n="infoBox" />
        <Tool n="cyls" />
        <Tool n="redCube" />
        <Tool n="plane" />
        <Tool n="cubeSplit" />
        <Tool n="cubeCut" />
        <Tool n="rect" />
        <Caret />
        <Tool n="hex" />
        <Caret />
        <Tool n="xyz" />
        <Tool n="crossSq" />
        <Tool n="ringSq" />
        <Tool n="textIc" />
        <Tool n="wireCube" />
        <Tool n="lamp" />
        <Tool n="ring" />
        <Caret low />
      </Group>
    </div>
    {/* row 4 */}
    <div className="mt-px flex h-[33px]">
      <Group className="w-[207px]">
        <Handle />
        <div className="w-[3px] shrink-0" />
        <Tool n="diaCube" />
        <Tool n="ruler" />
        <Tool n="triDia" />
        <Tool n="ruler" />
        <Tool n="triDia" />
        <Tool n="fit" />
        <Caret low />
      </Group>
    </div>
    {/* selection bar */}
    <div className="flex h-[31px] items-center">
      <Select label="没有选择过滤器" className="ml-[5px] w-[133px]" />
      <Select label="仅在工作部件内" className="ml-[7px] w-[140px]" />
      <Sep w="w-[12px]" />
      <Tool n="gFilter" w="w-[18px]" />
      <div className="ml-[2px] flex h-[18px] w-[18px] shrink-0 items-center justify-center border border-[#c8323a]"><Icon n="rFilter" s={14} /></div>
      <Caret w="w-[14px]" />
      <Tool n="gRot" w="w-[22px]" />
      <Tool n="gStack" w="w-[20px]" />
      <Sep w="w-[10px]" />
      <Tool n="selBox" w="w-[18px]" />
      <Caret w="w-[16px]" />
      <Sep w="w-[4px]" />
      <div className="w-[1px] shrink-0" />
      {["gSnap", "gLine", "gLineM", "gCurve", "gPts", "gArc", "gCirc", "gCircP", "gPlus", "gLineM", "gSurf"].map((n, i) => (
        <div key={i} className="flex w-[23px] shrink-0 justify-center"><Icon n={n} s={18} /></div>
      ))}
      <Sep w="w-[4px]" />
      <div className="flex w-[24px] shrink-0 justify-center"><Icon n="gGrid" s={18} /></div>
      <div className="mr-[4px] ml-auto pt-[10px]"><Caret w="w-[8px]" /></div>
    </div>
  </div>
);

const Select = ({ label, className }: { label: string; className: string }) => (
  <div className={`flex h-[20px] shrink-0 items-center border border-[#9a9a9a] bg-white pl-[2px] text-[11px] text-[#222] ${className}`}>
    {label}
    <div className="mr-[4px] ml-auto h-0 w-0 border-x-[4px] border-t-[5px] border-x-transparent border-t-[#111]" />
  </div>
);

const Clock = () => (
  <svg width="17" height="17" viewBox="0 0 17 17" className="block shrink-0">
    <circle cx="8.500" cy="8.500" r="7.300" fill="#dfe9f7" stroke="#85898e" strokeWidth="2" />
    <path d="M8.500 3.500v5.500h4" fill="none" stroke="#333" strokeWidth="1.300" />
  </svg>
);
const SheetIc = ({ stack = false }: { stack?: boolean }) => (
  <svg width="16" height="14" viewBox="0 0 16 14" className="block shrink-0">
    {stack && <path d="M3 2.500h12v9" fill="none" stroke="#a9b4d4" />}
    <rect x=".5" y={stack ? 3.5 : 1.5} width={stack ? 12.5 : 14} height={stack ? 10 : 11} fill="#e6ebf8" stroke="#8892b8" />
    <rect x={stack ? 8 : 9} y={stack ? 9.5 : 8.5} width="5" height="3.500" fill="#fff" stroke="#8892b8" strokeWidth=".7" />
  </svg>
);
const ImportIc = () => (
  <svg width="14" height="15" viewBox="0 0 14 15" className="block shrink-0">
    <rect x=".5" y=".5" width="13" height="14" fill="#cfd0d2" stroke="#222" />
    <rect x=".5" y=".5" width="3" height="14" fill="#f0f0f0" stroke="#222" />
    <circle cx="10.500" cy="11" r="1.500" fill="#333" />
  </svg>
);
const OrthoIc = () => (
  <svg width="14" height="15" viewBox="0 0 14 15" className="block shrink-0">
    <rect x=".5" y=".5" width="13" height="14" fill="#fff" stroke="#333" />
    <rect x=".5" y="9.500" width="13" height="5" fill="#fff" stroke="#c02020" />
    <path d="M4.500 9.500v5M9 9.500v5" stroke="#c02020" />
    <path d="M5 4.500h4M7 3v3" stroke="#333" />
  </svg>
);
const XMark = () => (
  <svg width="14" height="14" viewBox="0 0 14 14" className="block"><path d="M1 1l12 12M13 1L1 13" stroke="#d9141c" strokeWidth="2.600" /></svg>
);
const Tick = () => (
  <svg width="13" height="13" viewBox="0 0 13 13" className="block"><path d="M0 6.500l3-2 1.800 2.500L10 .5h3L5.500 12.500H3.500Z" fill="#1bb24a" /></svg>
);
const FolderIc = ({ mark = false, ruler = false }: { mark?: boolean; ruler?: boolean }) => (
  <svg width="16" height="16" viewBox="0 0 16 16" className="block shrink-0">
    <path d="M.5 4.500h5l1.500 1.500h7v9H.5Z" fill="#d8b24a" stroke="#a07a1c" />
    <path d="M.5 15l3-7h12l-2 7Z" fill="#fbd95c" stroke="#a07a1c" />
    {mark && <path d="M8 1h7M8 3h7" stroke="#3a43a8" />}
    {ruler && <rect x="6" y="1" width="9.500" height="3" fill="#f3e4a0" stroke="#8b7d3c" strokeWidth=".6" />}
  </svg>
);
const Expand = ({ open }: { open: boolean }) => (
  <div className="relative z-10 flex h-[9px] w-[9px] shrink-0 items-center justify-center border border-[#a8a8a8] bg-white">
    <div className="h-px w-[5px] bg-[#111]" />
    {!open && <div className="absolute h-[5px] w-px bg-[#111]" />}
  </div>
);
const BodyIc = () => (
  <svg width="33" height="16" viewBox="0 0 33 16" className="block shrink-0">
    <rect x="1" y="2.500" width="11" height="11" fill="#fff" stroke="#111" strokeWidth="1.200" />
    <path d="M3 7.500l2.500 3L11 2" fill="none" stroke="#18b040" strokeWidth="2.300" />
    <path d="M19 5h8l5 4-5 2h-8Z" fill="#5b84d8" stroke="#2e4fb0" strokeWidth=".7" />
    <path d="M22 10h6l4 3-4 2.500h-7Z" fill="#3d68cc" stroke="#2e4fb0" strokeWidth=".7" />
    <circle cx="18" cy="4.500" r="3.800" fill="#fff" stroke="#d51a1a" strokeWidth="1.600" />
    <path d="M15.500 7l5-5" stroke="#d51a1a" strokeWidth="1.400" />
    <path d="M22 1v4M22 2h5" stroke="#333" strokeWidth=".8" />
  </svg>
);

type Row = {
  kind: "root" | "sheet" | "child" | "late" | "folder" | "body";
  label: string;
  latest?: "x" | "ok";
  open?: boolean;
  ic?: "import" | "ortho" | "mark" | "ruler";
  a?: "full" | "half" | "end";
  b?: "full" | "half";
  c?: "full" | "half";
};

const rows: Row[] = [
  { kind: "root", label: "图纸", open: true, a: "full" },
  ...[1, 2, 3, 4, 5, 6, 7, 8].map((i): Row => ({ kind: "sheet", label: `图纸页 "SHT${i}"`, latest: "x", a: "full", b: "full" })),
  { kind: "sheet", label: '图纸页 "SHT9" (工作...', latest: "x", open: true, a: "full", b: "full" },
  { kind: "child", label: '导入的 "Top@29"', latest: "x", ic: "import", a: "full", b: "full", c: "full" },
  { kind: "child", label: '导入的 "Top@32"', latest: "x", ic: "import", a: "full", b: "full", c: "full" },
  { kind: "child", label: '投影 "ORTHO@...', latest: "x", ic: "ortho", a: "full", b: "full", c: "full" },
  { kind: "child", label: '投影 "ORTHO@...', latest: "x", ic: "ortho", a: "full", b: "full", c: "half" },
  { kind: "late", label: "过时", a: "full", b: "half" },
  { kind: "folder", label: "用户表达式", ic: "mark", a: "full" },
  { kind: "folder", label: "组", a: "full" },
  { kind: "folder", label: "测量", ic: "ruler", a: "full" },
  { kind: "folder", label: "模型历史记录", open: true, a: "half" },
  ...[0, 1, 3, 4, 5, 6, 7, 8, 9, 10, 11, 12, 13, 14].map((i): Row => ({ kind: "body", label: `体 (${i})`, latest: "ok", b: "full" })),
];

const Guides = ({ r }: { r: Row }) => (
  <>
    {r.a === "full" && <div className="absolute top-0 left-[9px] h-[20px] border-l border-dotted border-[#999]" />}
    {r.a === "half" && <div className="absolute top-0 left-[9px] h-[10px] border-l border-dotted border-[#999]" />}
    {r.b === "full" && <div className="absolute top-0 left-[28px] h-[20px] border-l border-dotted border-[#999]" />}
    {r.b === "half" && <div className="absolute top-0 left-[28px] h-[10px] border-l border-dotted border-[#999]" />}
    {r.c === "full" && <div className="absolute top-0 left-[47px] h-[20px] border-l border-dotted border-[#999]" />}
    {r.c === "half" && <div className="absolute top-0 left-[47px] h-[10px] border-l border-dotted border-[#999]" />}
    {r.kind === "sheet" && <div className="absolute top-[10px] left-[28px] w-[10px] border-t border-dotted border-[#999]" />}
    {r.kind === "child" && <div className="absolute top-[10px] left-[47px] w-[10px] border-t border-dotted border-[#999]" />}
    {r.kind === "late" && <div className="absolute top-[10px] left-[28px] w-[12px] border-t border-dotted border-[#999]" />}
    {r.kind === "body" && <div className="absolute top-[10px] left-[28px] w-[10px] border-t border-dotted border-[#999]" />}
    {(r.kind === "folder" || r.kind === "root") && <div className="absolute top-[10px] left-[9px] w-[10px] border-t border-dotted border-[#999]" />}
  </>
);

const TreeRow = ({ r, odd }: { r: Row; odd: boolean }) => (
  <div className={`flex h-[20px] border-b border-[#ececec] ${odd ? "bg-[#fafafa]" : "bg-white"}`}>
    <div className="relative flex w-[199px] shrink-0 items-center border-r border-[#e2e2e2] text-[12px] whitespace-nowrap text-[#4a4a4a]">
      <Guides r={r} />
      {r.kind === "root" && (
        <>
          <div className="ml-[5px]"><Expand open /></div>
          <div className="ml-[4px]"><Clock /></div>
          <div className="ml-[1px]"><SheetIc stack /></div>
          <span className="ml-[2px]">{r.label}</span>
        </>
      )}
      {r.kind === "sheet" && (
        <>
          <div className="ml-[24px]"><Expand open={!!r.open} /></div>
          <div className="ml-[4px]"><Clock /></div>
          <div className="ml-[1px]"><SheetIc /></div>
          <span className="ml-[2px]">{r.label}</span>
        </>
      )}
      {r.kind === "child" && (
        <>
          <div className="ml-[57px]"><Clock /></div>
          <div className="ml-[2px]">{r.ic === "import" ? <ImportIc /> : <OrthoIc />}</div>
          <span className="ml-[3px]">{r.label}</span>
        </>
      )}
      {r.kind === "late" && (
        <>
          <span className="ml-[41px] w-[12px] text-[14px] leading-none font-bold text-[#e0b81c]">?</span>
          <div className="ml-[1px]"><FolderIc /></div>
          <span className="ml-[3px]">{r.label}</span>
        </>
      )}
      {r.kind === "folder" && (
        <>
          <div className="ml-[5px]"><Expand open={!!r.open} /></div>
          <div className="ml-[4px]"><FolderIc mark={r.ic === "mark"} ruler={r.ic === "ruler"} /></div>
          <span className="ml-[3px]">{r.label}</span>
        </>
      )}
      {r.kind === "body" && (
        <>
          <div className="ml-[39px]"><BodyIc /></div>
          <span className="ml-[2px]">{r.label}</span>
        </>
      )}
    </div>
    <div className="flex flex-1 items-center pl-[5px]">
      {r.latest === "x" && <XMark />}
      {r.latest === "ok" && <div className="pl-[1px]"><Tick /></div>}
    </div>
  </div>
);

const NavPanel = () => (
  <div className="flex w-[332px] shrink-0 flex-col bg-white">
    <div className="flex h-[28px] items-center pt-[2px] pl-[10px] text-[12px] text-[#444]">
      部件导航器
      <div className="mr-[10px] ml-auto h-[11px] w-[12px] border border-[#222] border-t-2" />
    </div>
    <div className="mr-[10px] ml-[6px] flex h-[686px] flex-col border border-[#d0d0d0] pl-px">
      {/* header */}
      <div className="flex h-[21px] shrink-0 border-b border-[#d8d8d8] bg-[#f0f0f0] text-[12px] text-[#444]">
        <div className="flex w-[199px] items-center border-r border-[#d4d4d4] pl-[6px]">
          名称
          <div className="ml-[17px] h-0 w-0 border-x-[4px] border-b-[5px] border-x-transparent border-b-[#222]" />
        </div>
        <div className="flex w-[100px] items-center border-r border-[#d4d4d4] pl-[6px]">最新</div>
        <div className="flex w-[12px] items-center overflow-hidden pl-[6px]">附</div>
      </div>
      <div className="flex h-[645px] shrink-0">
        <div className="h-full w-[296px] overflow-hidden">
          {rows.map((r, i) => (
            <TreeRow key={i} r={r} odd={i % 2 === 1} />
          ))}
        </div>
        {/* vertical scrollbar */}
        <div className="flex w-[16px] flex-col items-center bg-[#f3f3f3]">
          <div className="mt-[8px] h-0 w-0 border-x-[4px] border-b-[4px] border-x-transparent border-b-[#555]" />
          <div className="mt-[12px] flex h-[75px] w-[14px] items-center justify-center rounded-[2px] border border-[#b4b4b4] bg-gradient-to-r from-[#f6f6f6] via-[#e2e2e2] to-[#bdbdbd]">
            <div className="h-[6px] w-[7px] border-y border-[#666] bg-[linear-gradient(#666,#666)] bg-[length:100%_1px] bg-center bg-no-repeat" />
          </div>
          <div className="mt-auto mb-[6px] h-0 w-0 border-x-[4px] border-t-[4px] border-x-transparent border-t-[#555]" />
        </div>
      </div>
      {/* horizontal scrollbar */}
      <div className="flex h-[17px] shrink-0 items-center bg-[#f3f3f3]">
        <div className="ml-[6px] h-0 w-0 border-y-[4px] border-r-[4px] border-y-transparent border-r-[#444]" />
        <div className="ml-[8px] flex h-[15px] w-[190px] items-center justify-center rounded-[2px] border border-[#a8a8a8] bg-gradient-to-b from-[#f4f4f4] via-[#e0e0e0] to-[#c2c2c2]">
          <div className="h-[7px] w-[7px] border-x border-[#555] bg-[linear-gradient(#555,#555)] bg-[length:1px_100%] bg-center bg-no-repeat" />
        </div>
        <div className="ml-[76px] h-0 w-0 border-y-[4px] border-l-[4px] border-y-transparent border-l-[#444]" />
      </div>
    </div>
    <div className="mt-px mr-[10px] ml-[6px] h-[4px] border border-[#b4b4b4] bg-[#e0e0e0]" />
    {["相依性", "细节", "预览"].map(t => (
      <div key={t} className="mt-[3px] mr-[10px] ml-[6px] flex h-[21px] shrink-0 items-end justify-between border-b-[3px] border-[#d4d4d4] pr-[5px] pl-[7px] text-[14px] leading-[18px] text-[#3b9bd0]">
        {t}
        <svg width="12" height="10" viewBox="0 0 12 10" className="mb-[5px] block"><path d="M1 1l5 7 5-7" fill="none" stroke="#3b9bd0" strokeWidth="1.800" /></svg>
      </div>
    ))}
  </div>
);

const sideTabs = [
  { c: "mt-[16px] h-[42px]", ic: "stack" },
  { c: "h-[41px]", ic: "sym" },
  { c: "h-[46px] bg-white border-y border-[#bbb]", ic: "db" },
  { c: "h-[38px]", ic: "books" },
  { c: "mt-[8px] h-[52px]", ic: "infoW" },
  { c: "mt-[8px] h-[42px]", ic: "docW" },
  { c: "mt-[12px] h-[42px]", ic: "clock" },
  { c: "mt-[8px] h-[42px]", ic: "colors" },
  { c: "h-[28px]", ic: "pick" },
  { c: "mt-[6px] h-[42px]", ic: "tools" },
  { c: "h-[42px]", ic: "door" },
  { c: "h-[42px]", ic: "win" },
];

const tabIcons: Record<string, React.ReactNode> = {
  stack: <><Cube x={0} y={3} s={5} /><Cube x={12} y={15} s={4} /><Ln d="M9 12V23M9 17H12M14 12h9" c="#2f4fc8" /></>,
  sym: <><path d="M1 2l9 5-9 5ZM22 2l-9 5 9 5Z" fill="#2030c0" /><rect x="1" y="14" width="9" height="8" fill="#f4e04c" stroke="#555" /><path d="M13 12l9 10h-9Z" fill="#c01818" stroke="#555" strokeWidth=".5" /><Ln d="M12 1v22" c="#444" dash="2 1" /></>,
  db: <><path d="M1 4c0-3 9-3 9 0v8H1Z" fill="#d8a0c4" stroke="#8c2a78" /><Ln d="M1 7c0 2 9 2 9 0" c="#8c2a78" /><Ln d="M14 11h10M6 14V24M6 19H12" c="#2f4fc8" /><circle cx="18" cy="19" r="4" fill="none" stroke="#8c2a78" /><circle cx="18" cy="19" r="1.500" fill="#8c2a78" /></>,
  books: <><path d="M0 5l4-3 4 0v20H0Z" fill="#e87a2c" stroke="#a85010" /><path d="M8 4l4-3h3v21H8Z" fill="#48b04a" stroke="#2c7c2e" /><path d="M15 5l4-3h5v17l-4 3h-5Z" fill="#2d8fd8" stroke="#1c6098" /></>,
  infoW: <><circle cx="9" cy="15" r="8" fill="#1e8fe0" stroke="#125a9c" /><text x="9" y="20" textAnchor="middle" fontSize="13" fontWeight="700" fontFamily="Liberation Serif" fill="#fff">i</text><Ln d="M10 4c6 0 10 4 11 9M11 0c8 0 12 6 13 12" c="#3a82d0" w={2} /></>,
  docW: <><path d="M3 1h12l6 6v17H3Z" fill="#fff" stroke="#3a6fc8" strokeWidth="1.300" /><circle cx="12" cy="15" r="6" fill="#3d9a56" /><path d="M8 12a6 6 0 0 1 9 0l-4 3Z" fill="#3a82d0" /></>,
  clock: <><circle cx="12" cy="12" r="10.500" fill="#d9e5f6" stroke="#85898e" strokeWidth="1.800" /><path d="M12 5v8h6" fill="none" stroke="#333" strokeWidth="1.500" /></>,
  colors: <><defs><linearGradient id="rb" x1="0" y1="0" x2="0" y2="1"><stop offset="0" stopColor="#f44" /><stop offset=".3" stopColor="#fd3" /><stop offset=".6" stopColor="#3e5" /><stop offset="1" stopColor="#22f" /></linearGradient></defs><rect x="2" y="0" width="10" height="24" fill="url(#rb)" /><Ln d="M12 8l10 16" c="#222" w={2.400} /><Dot x={11} y={4} c="#fff" /></>,
  pick: <><path d="M3 5l4-1 3 18-6-1Z" fill="#3a82d0" /><Ln d="M4 10h5M4 14h5M5 18h4" c="#bcd9f0" /><path d="M8 6L23 1 15 10Z" fill="#cfe2f6" stroke="#6e8ea8" strokeWidth=".5" /><path d="M12 6l8 15-4-2-2 3Z" fill="#222" /></>,
  tools: <><Ln d="M4 22L20 5" c="#777" w={2} /><path d="M13 4c3-3 7-3 10 1l-6 1Z" fill="#666" /><circle cx="6" cy="19" r="4" fill="none" stroke="#777" strokeWidth="1.800" /><path d="M1 22l4-4h6l-3 5Z" fill="#e8912c" /></>,
  door: <><path d="M1 4l5-3v22l-5-2Z" fill="#e6e6e6" stroke="#777" /><rect x="6" y="2" width="17" height="18" fill="#fff" stroke="#777" /><rect x="10" y="4" width="11" height="12" fill="#e83820" /><path d="M12 4h7l-2 5h-3Z" fill="#3a82d0" /></>,
  win: <><rect x="1" y="2" width="22" height="20" fill="#dbe4f5" stroke="#6e8ec8" /><rect x="4" y="5" width="15" height="4" fill="#eee" stroke="#666" /><rect x="4" y="9" width="15" height="6" fill="#eee" stroke="#666" /><rect x="15" y="17" width="7" height="4" fill="#eee" stroke="#999" /></>,
};

const SideStrip = () => (
  <div className="flex w-[32px] shrink-0 flex-col border-r border-[#a8a8a8] bg-[#dcdcdc]">
    <div className="flex h-[24px] shrink-0 items-center justify-center">
      <svg width="15" height="15" viewBox="0 0 15 15" className="block"><circle cx="7.500" cy="7.500" r="4" fill="none" stroke="#333" strokeWidth="2" /><path d="M7.500 0v3M7.500 12v3M0 7.500h3M12 7.500h3M2 2l2 2M11 11l2 2M13 2l-2 2M4 11l-2 2" stroke="#333" strokeWidth="1.500" /></svg>
    </div>
    {sideTabs.map(t => (
      <div key={t.ic} className={`flex shrink-0 items-center justify-center ${t.c} ${t.ic === "db" ? "w-[32px]" : ""}`}>
        <svg width="24" height="24" viewBox="0 0 24 24" className="block overflow-visible">{tabIcons[t.ic]}</svg>
      </div>
    ))}
  </div>
);

const Dialog = () => (
  <div className="absolute top-[242px] left-[472px] flex h-[112px] w-[244px] flex-col border border-[#b0b0b0] border-t-0 bg-[#e8e8e8]">
    <div className="-mx-px flex h-[28px] items-center bg-[#5d8a84] pl-[9px] text-[12px] text-white">按 “确定” 继续</div>
    <div className="flex h-[49px] items-center pt-[1px] pl-[15px] text-[12px] text-[#333]">
      <svg width="32" height="32" viewBox="0 0 32 32" className="block">
        <defs><radialGradient id="er" cx=".4" cy=".3" r=".8"><stop offset="0" stopColor="#ea5a5a" /><stop offset="1" stopColor="#9c0808" /></radialGradient></defs>
        <circle cx="16" cy="16" r="14.500" fill="url(#er)" stroke="#9a9a9a" strokeWidth="1.500" />
        <path d="M10 10l12 12M22 10L10 22" stroke="#e4e4e4" strokeWidth="4" />
      </svg>
      <span className="ml-[14px]">无效的或损坏的函数指针</span>
    </div>
    <div className="flex justify-center">
      <div className="ml-[1px] flex h-[25px] w-[63px] items-center justify-center border border-[#5a9fc8] bg-[#9dcdea] p-[2px]">
        <div className="flex h-full w-full items-center justify-center border border-dotted border-[#b06a30] text-[12px] text-[#222]">确定(<u>O</u>)</div>
      </div>
    </div>
  </div>
);

const Canvas = () => (
  <div className="relative flex-1 overflow-hidden border-b border-l-2 border-[#8c8c8c] bg-[#d3d4d6]">
    <div className="absolute top-[8px] left-[387px] h-[779px] w-[778px] border border-dashed border-[#777]" />
    <span className="absolute top-[776px] left-[5px] text-[12px] text-[#eda35a]">图纸页 "SHT9" 工作 (过时)</span>
    <Dialog />
    <div className="absolute top-[325px] left-[1535px] flex h-[46px] w-[46px] items-center rounded-full border-[3px] border-[#e4e6e6] bg-[#3fc75e] pl-[2px] text-[13px] font-bold text-white shadow-[-2px_2px_5px_rgba(0,0,0,0.3)] [font-family:'Liberation_Sans',sans-serif]">53</div>
  </div>
);

const Watermark = () => (
  <div className="pointer-events-none absolute top-[945px] left-[1618px] flex">
    <svg width="86" height="98" viewBox="0 0 86 98" className="block">
      <path d="M43 1L85 25V73L43 97L1 73V25Z" fill="#6a9ad0" stroke="#e8eef4" strokeWidth="2.500" />
      <path d="M43 1L85 25V73L66 84C50 60 62 32 52 6Z" fill="#66bce4" />
      <path d="M20 62C30 84 55 90 82 74L43 97L6 76Z" fill="#73c8f2" opacity=".9" />
      <path d="M43 26L64 38V62L43 74L22 62V38Z" fill="#e8eef4" />
      <path d="M43 31L60 41L43 51L26 41Z" fill="#e8eef4" />
      <path d="M26 42L42 51V69L26 60Z" fill="#6a9ad0" />
      <path d="M60 42L44 51V69L60 60Z" fill="#66bce4" />
      <path d="M26 41L43 32L60 41L43 50Z" fill="#6a9ad0" />
    </svg>
    <div className="ml-[9px] flex flex-col">
      <span className="mt-[15px] text-[46px] leading-[50px] font-bold whitespace-nowrap text-[#62bde6] [-webkit-text-stroke:3px_#f0f3f5] [paint-order:stroke_fill] [font-family:'Noto_Sans_CJK_SC',sans-serif]">3D世界网</span>
      <span className="text-[13px] leading-[12px] font-bold tracking-[5.5px] whitespace-nowrap text-[#62bde6] [font-family:'Liberation_Sans',sans-serif]">WWW.3DSJW.COM</span>
    </div>
  </div>
);

const Taskbar = () => (
  <div className="flex h-[8px] items-start overflow-hidden border-t border-[#3a4448] bg-[#0e1518]">
    <div className="ml-[10px] h-[20px] w-[31px] rounded-full bg-[#b8d4e8]" />
    <div className="ml-[30px] h-[10px] w-[23px] rounded-full bg-[#d8d820]" />
    <div className="ml-[51px] h-[10px] w-[18px] rounded-t-full border-t-2 border-[#e8a020] bg-[#2a70b0]" />
    <div className="ml-[42px] h-[8px] w-[14px] rounded-full bg-black" />
    <div className="ml-[24px] h-[8px] w-[50px] bg-[#a8a8a2]" />
    <div className="ml-[12px] h-[8px] w-[57px] bg-[#b0b4b0]" />
    <div className="ml-[19px] h-[8px] w-[30px] bg-[#20d020]" />
    <div className="ml-[80px] h-[8px] w-[58px] bg-[#d8d8d8]" />
    <div className="ml-[5px] h-[8px] w-[50px] bg-[#a09c9c]" />
    <div className="ml-[11px] h-[8px] w-[58px] bg-[#8c948c]" />
    <span className="mt-px ml-auto text-[11px] leading-[12px] font-bold text-white">10:40</span>
    <div className="ml-[22px] h-[8px] w-[13px] bg-[#707070]" />
  </div>
);

export default function App() {
  return (
    <div className="relative flex h-[1048px] w-[1920px] flex-col overflow-hidden bg-white [font-family:'Liberation_Sans','Noto_Sans_CJK_SC',sans-serif]">
      <TitleBar />
      <MenuBar />
      <Toolbars />
      <div className="h-[2px] bg-[#858d8f]" />
      <div className="flex h-[796px]">
        <SideStrip />
        <NavPanel />
        <Canvas />
      </div>
      <div className="flex h-[22px] items-center pl-[3px] text-[12px] font-medium text-[#111]">
        按 “确定” 继续
        <div className="mr-[53px] ml-auto flex items-center gap-[6px]">
          <div className="h-[14px] w-[15px] bg-[#d4d4d4]" />
          <div className="h-[14px] w-[15px] border border-[#888] bg-[#7d9cd8]" />
        </div>
      </div>
      <Taskbar />
      <Watermark />
    </div>
  );
}
